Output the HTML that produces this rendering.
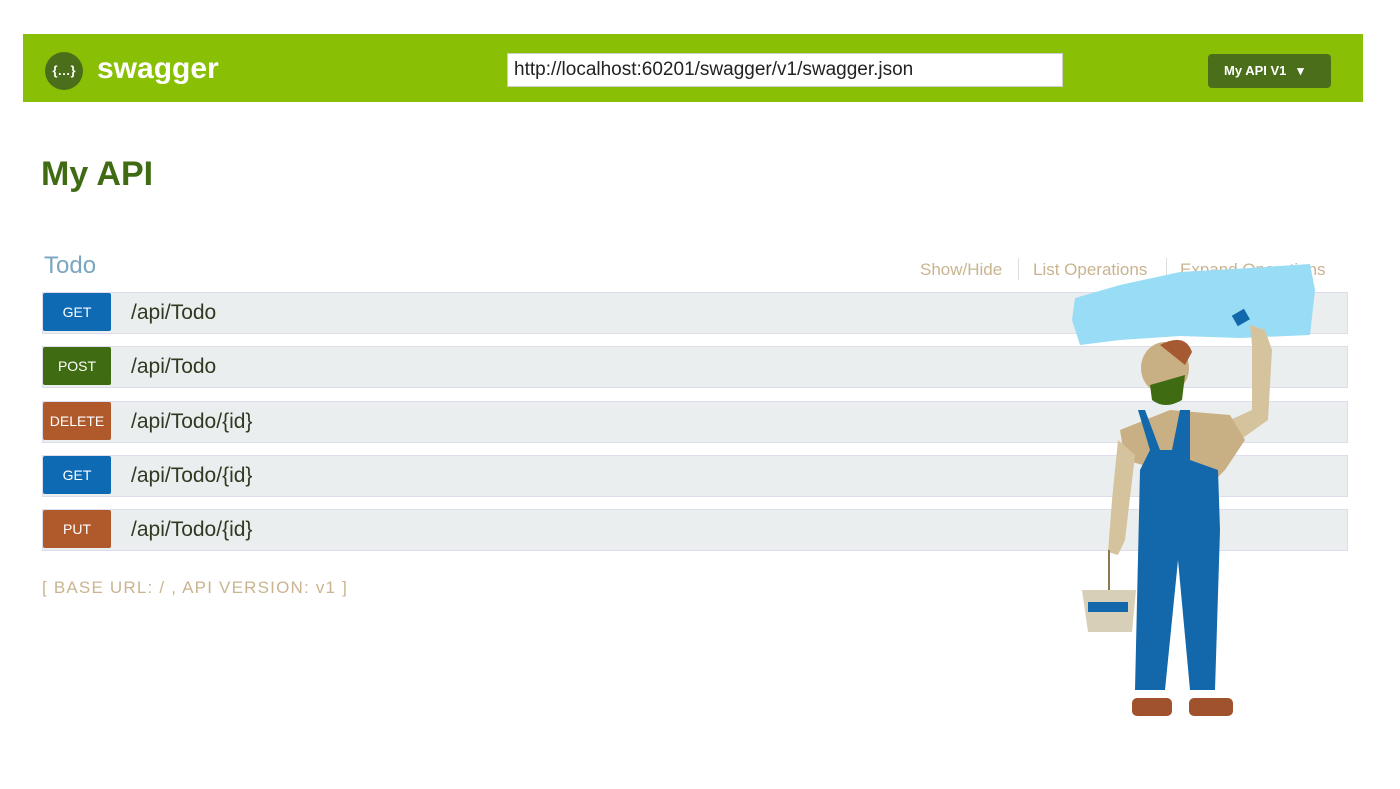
<!DOCTYPE html>
<html><head><meta charset="utf-8"><style>
body{margin:0;width:1400px;height:789px;background:#fff;font-family:"Liberation Sans",Arial,sans-serif;position:relative;overflow:hidden}
.hdr{position:absolute;left:23px;top:34px;width:1340px;height:68px;background:#89bf04}
.logo{position:absolute;left:22px;top:18px;width:38px;height:38px;border-radius:50%;background:#4a6e1a;color:#fff;font-size:13px;font-weight:bold;text-align:center;line-height:38px}
.brand{position:absolute;left:74px;top:18px;color:#fff;font-weight:bold;font-size:30px}
.url{position:absolute;left:484px;top:19px;width:556px;height:34px;background:#fff;border:1px solid #ccc;box-sizing:border-box;font-size:19px;line-height:32px;padding-left:6px;color:#222}
.sel{position:absolute;left:1185px;top:20px;width:123px;height:34px;background:#4a6e1a;border-radius:4px;color:#fff;font-size:13px;font-weight:bold;line-height:34px;padding-left:16px;box-sizing:border-box}
h1{position:absolute;left:41px;top:155px;margin:0;font-size:34px;color:#3f6b12;font-weight:bold}
.todo{position:absolute;left:44px;top:252px;font-size:24px;color:#7aa6c2}
.ops{position:absolute;top:260px;font-size:17px;color:#c9b48f}
.row{position:absolute;left:42px;width:1304px;height:40px;background:#ebeeee;border:1px solid #dde}
.b{position:absolute;left:0;top:0;width:68px;height:38px;color:#fff;font-size:14px;text-align:center;line-height:38px;border-radius:2px}
.p{position:absolute;left:88px;top:8px;font-size:21px;color:#2f3a22}
.foot{position:absolute;left:42px;top:578px;font-size:17px;color:#c9b48f;letter-spacing:1.2px}
</style></head><body>
<div class="hdr"><div class="logo">{…}</div><div class="brand">swagger</div>
<div class="url">http://localhost:60201/swagger/v1/swagger.json</div>
<div class="sel">My API V1 &nbsp;&nbsp;▾</div></div>
<h1>My API</h1>
<div class="todo">Todo</div>
<div class="ops" style="left:920px">Show/Hide</div>
<div style="position:absolute;left:1018px;top:258px;width:1px;height:22px;background:#ddd"></div>
<div class="ops" style="left:1033px">List Operations</div>
<div style="position:absolute;left:1166px;top:258px;width:1px;height:22px;background:#ddd"></div>
<div class="ops" style="left:1180px">Expand Operations</div>
<div class="row" style="top:292px"><div class="b" style="background:#0f6ab4">GET</div><div class="p">/api/Todo</div></div>
<div class="row" style="top:346px"><div class="b" style="background:#3f6b12">POST</div><div class="p">/api/Todo</div></div>
<div class="row" style="top:401px"><div class="b" style="background:#b05a2c">DELETE</div><div class="p">/api/Todo/{id}</div></div>
<div class="row" style="top:455px"><div class="b" style="background:#0f6ab4">GET</div><div class="p">/api/Todo/{id}</div></div>
<div class="row" style="top:509px"><div class="b" style="background:#b05a2c">PUT</div><div class="p">/api/Todo/{id}</div></div>
<div class="foot">[ BASE URL: / , API VERSION: v1 ]</div>
<svg style="position:absolute;left:0;top:0" width="1400" height="789">
<path d="M1075 298 L1120 285 L1180 272 L1250 268 L1310 264 L1315 290 L1310 335 L1240 338 L1180 336 L1120 340 L1080 345 L1072 320 Z" fill="#99dcf5"/>
<rect x="1234" y="312" width="14" height="12" fill="#1169ab" transform="rotate(-30 1240 318)"/>
<path d="M1250 325 L1265 330 L1272 350 L1268 420 L1240 440 L1230 420 L1252 410 L1252 345 Z" fill="#d5c39d"/>
<path d="M1120 430 L1170 410 L1230 415 L1245 440 L1225 470 L1215 480 L1160 470 L1125 460 Z" fill="#c9b084"/>
<path d="M1118 440 L1135 455 L1125 540 L1118 555 L1108 552 L1112 500 Z" fill="#d5c39d"/>
<ellipse cx="1165" cy="368" rx="24" ry="26" fill="#c9b084"/>
<path d="M1160 345 Q1185 332 1192 352 L1185 365 Z" fill="#a65a32"/>
<path d="M1150 385 L1185 375 L1182 400 Q1165 410 1152 400 Z" fill="#3f6b12"/>
<path d="M1138 410 L1145 410 L1160 450 L1172 450 L1180 410 L1190 410 L1190 460 L1218 470 L1220 530 L1215 690 L1190 690 L1178 560 L1165 690 L1135 690 L1140 470 L1150 450 Z" fill="#1368ab"/>
<rect x="1108" y="550" width="2" height="40" fill="#8a7a50"/>
<path d="M1082 590 L1136 590 L1132 632 L1088 632 Z" fill="#d8cfb8"/>
<rect x="1088" y="602" width="40" height="10" fill="#1368ab"/>
<rect x="1132" y="698" width="40" height="18" rx="5" fill="#a0522d"/>
<rect x="1189" y="698" width="44" height="18" rx="5" fill="#a0522d"/>
</svg>
</body></html>
